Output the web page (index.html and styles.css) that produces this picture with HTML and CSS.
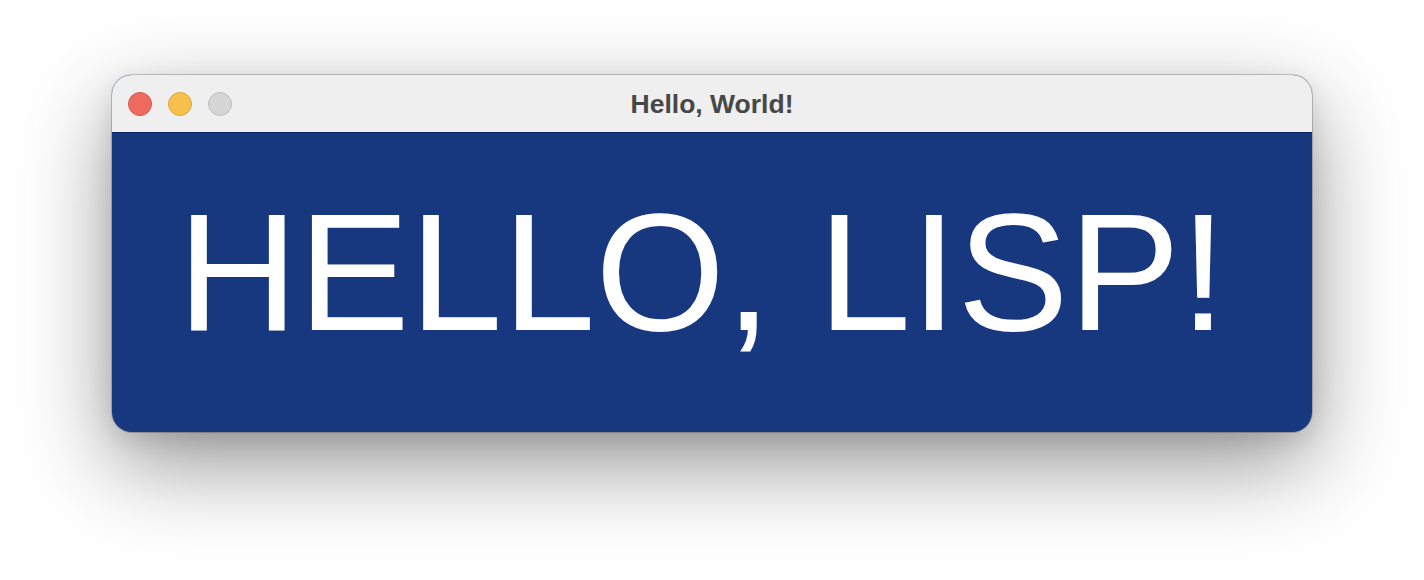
FILE: index.html
```html
<!DOCTYPE html>
<html>
<head>
<meta charset="utf-8">
<link rel="stylesheet" href="styles.css">
</head>
<body>
<div class="window">
  <div class="titlebar">
    <div class="lights">
      <span class="light red"></span>
      <span class="light yellow"></span>
      <span class="light gray"></span>
    </div>
    <div class="title">Hello, World!</div>
  </div>
  <div class="content">
    <div class="hello">HELLO, LISP!</div>
  </div>
</div>
</body>
</html>
```
FILE: styles.css
```css
html, body {
  margin: 0;
  background: #ffffff;
}
body {
  width: 1424px;
  height: 580px;
  padding: 75px 0 0 112px;
  box-sizing: border-box;
  overflow: hidden;
}
.window {
  width: 1200px;
  height: 357px;
  border-radius: 20px;
  overflow: hidden;
  display: flex;
  flex-direction: column;
  box-shadow: 0 0 0 1px rgba(0,0,0,0.2), 0 32px 90px rgba(0,0,0,0.42), 0 8px 24px rgba(0,0,0,0.1);
  background: #17387f;
}
.titlebar {
  height: 57px;
  flex: none;
  background: #eeefee;
  border-bottom: 1px solid #0b2161;
  position: relative;
  display: flex;
  align-items: center;
  justify-content: center;
}
.lights {
  position: absolute;
  left: 16px;
  top: 17px;
  display: flex;
  gap: 16px;
}
.light {
  width: 22px;
  height: 22px;
  border-radius: 50%;
  display: block;
}
.red { background: #ee6a5f; border: 1px solid #d4564b; }
.yellow { background: #f7c04f; border: 1px solid #dca63a; }
.gray { background: #d5d6d5; border: 1px solid #bdbebd; }
.title {
  font-family: "Liberation Sans", Arial, sans-serif;
  font-weight: bold;
  font-size: 26.5px;
  color: #474747;
  margin-top: 1px;
}
.content {
  flex: 1;
  display: flex;
  justify-content: center;
  padding-top: 56px;
}
.hello {
  font-family: "Liberation Sans", Arial, sans-serif;
  font-size: 167px;
  letter-spacing: 0;
  line-height: 1;
  color: #ffffff;
  height: 167px;
  margin-left: -20px;
}
```
